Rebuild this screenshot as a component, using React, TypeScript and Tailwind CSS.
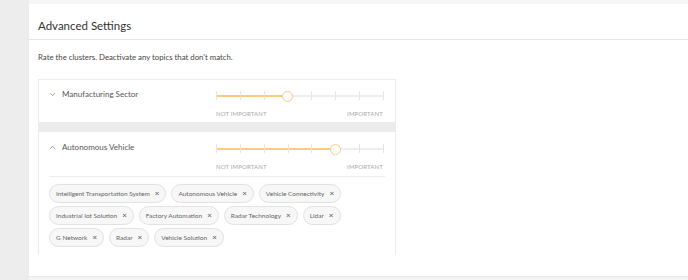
import { ChevronDown, ChevronUp } from "lucide-react";

const font = { fontFamily: "Lato, 'Open Sans', sans-serif" };

const topics = [
  ["Intelligent Transportation System", "Autonomous Vehicle", "Vehicle Connectivity"],
  ["Industrial Iot Solution", "Factory Automation", "Radar Technology", "Lidar"],
  ["G Network", "Radar", "Vehicle Solution"],
];

function Slider({ value }: { value: number }) {
  const steps = 7;
  return (
    <div className="w-[167px]">
      <div className="relative h-[10px]">
        <div className="absolute left-0 right-0 top-[4px] h-[2px] bg-[#eeeeee]" />
        <div className="absolute left-0 top-[4px] h-[2px] bg-[#fdc97c]" style={{ width: `${(value / steps) * 100}%` }} />
        {Array.from({ length: steps + 1 }).map((_, i) => (
          <div key={i} className="absolute top-[0px] h-[9px] w-px bg-[#e6e6e6]" style={{ left: `${(i / steps) * 100}%` }} />
        ))}
        <div
          className="absolute -top-[0.5px] h-[11px] w-[11px] -ml-[5.5px] rounded-full border-[1.5px] border-[#fdc97c] bg-white"
          style={{ left: `${(value / steps) * 100}%` }}
        />
      </div>
      <div className="flex justify-between mt-[10px] text-[6px] tracking-wide text-[#a8a8a8] uppercase leading-none">
        <span>Not important</span>
        <span>Important</span>
      </div>
    </div>
  );
}

export default function App() {
  return (
    <div className="flex w-[688px] h-[280px] bg-[#ededed] overflow-hidden" style={font}>
      <div className="w-[29px] shrink-0" />
      <div className="flex-1 bg-[#f6f6f6] pt-[4px]">
        <div className="bg-white h-[272px] shadow-[0_1px_1px_rgba(0,0,0,0.05)]">
          <div className="h-[36px] border-b border-[#e6e6e6] px-[9px] flex items-center pt-[8px]">
            <h1 className="text-[11.5px] text-[#333] leading-none">Advanced Settings</h1>
          </div>
          <div className="px-[9px]">
            <p className="text-[7.8px] text-[#444] mt-[12px] leading-[10px]">Rate the clusters. Deactivate any topics that don't match.</p>

            <div className="mt-[17px] w-[358px] h-[176px] border-t border-l border-r border-[#ececec]">
              {/* Manufacturing Sector */}
              <div className="h-[42px] flex">
                <div className="w-[177px] flex items-start pt-[9px] pl-[9px] gap-[5px]">
                  <ChevronDown size={9} strokeWidth={1.5} className="text-[#555] mt-px" />
                  <span className="text-[8px] text-[#555] leading-[10px]">Manufacturing Sector</span>
                </div>
                <div className="pt-[11px]">
                  <Slider value={3} />
                </div>
              </div>

              <div className="h-[10px] bg-[#ececec]" />

              {/* Autonomous Vehicle */}
              <div className="flex h-[44px]">
                <div className="w-[177px] flex items-start pt-[10px] pl-[9px] gap-[5px]">
                  <ChevronUp size={9} strokeWidth={1.5} className="text-[#555] mt-px" />
                  <span className="text-[8px] text-[#555] leading-[10px]">Autonomous Vehicle</span>
                </div>
                <div className="pt-[12px]">
                  <Slider value={5} />
                </div>
              </div>
              <div className="mx-[10px] border-t border-[#eeeeee]" />

              <div className="px-[10px] pt-[7px] flex flex-col gap-[3px]">
                {topics.map((row, r) => (
                  <div key={r} className="flex gap-[5px]">
                    {row.map((t) => (
                      <div
                        key={t}
                        className="h-[19px] flex items-center gap-[5px] pl-[6px] pr-[6px] rounded-full border border-[#e2e2e2] bg-[#f7f7f7] text-[6.5px] text-[#666]"
                      >
                        <span>{t}</span>
                        <span className="text-[8px] font-bold text-[#777] leading-none -mt-[2px]">×</span>
                      </div>
                    ))}
                  </div>
                ))}
              </div>
            </div>
          </div>
        </div>
      </div>
    </div>
  );
}
